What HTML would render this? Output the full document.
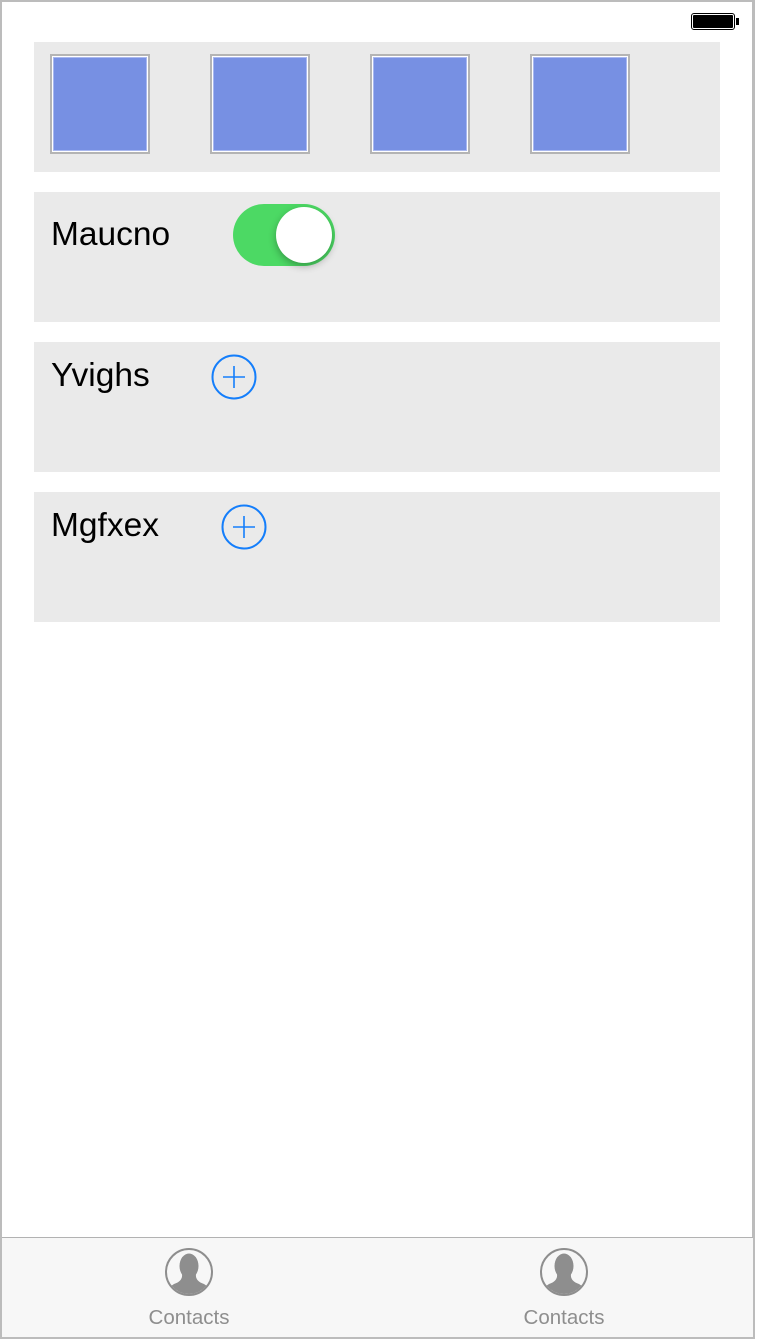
<!DOCTYPE html>
<html><head><style>
body{margin:0;width:760px;height:1340px;position:relative;font-family:"Liberation Sans",sans-serif;background:#fff;overflow:hidden}
.frame{position:absolute;left:0;top:0;width:750px;height:1334px;border:2px solid #bcbcbc;border-right-width:3px;border-bottom-width:3px}
.box{position:absolute;left:34px;width:686px;height:130px;background:#eaeaea}
.sq{position:absolute;top:54px;width:96px;height:96px;border:2px solid #b4b4b4;background:#fff}
.sq div{position:absolute;left:1px;top:1px;width:94px;height:94px;background:#7790e3;box-shadow:inset 0 0 0 1px #a9b8f0}
.lbl{position:absolute;left:51px;font-size:33.5px;color:#000}
.tab{position:absolute;left:2px;top:1237px;width:751px;height:99px;background:#f7f7f7;border-top:1px solid #b2b2b2}
.tl{position:absolute;top:1306px;font-size:20.5px;color:#8e8e8e;width:160px;text-align:center}
</style></head><body>
<div class="frame"></div>
<div style="position:absolute;left:691px;top:13px;width:44px;height:17px;border:1px solid #000;border-radius:3px;box-sizing:border-box;padding:1px"><div style="background:#000;width:100%;height:100%;border-radius:1px"></div></div>
<div style="position:absolute;left:736px;top:18px;width:3px;height:7px;background:#000"></div>
<div class="box" style="top:42px"></div>
<div class="sq" style="left:50px"><div></div></div>
<div class="sq" style="left:210px"><div></div></div>
<div class="sq" style="left:370px"><div></div></div>
<div class="sq" style="left:530px"><div></div></div>
<div class="box" style="top:192px"></div>
<div class="lbl" style="top:216px">Maucno</div>
<div style="position:absolute;left:233px;top:204px;width:102px;height:62px;border-radius:31px;background:#4cd964"></div>
<div style="position:absolute;left:276px;top:207px;width:56px;height:56px;border-radius:50%;background:#fff;box-shadow:0 3px 8px rgba(0,0,0,.3)"></div>
<div class="box" style="top:342px"></div>
<div class="lbl" style="top:357px">Yvighs</div>
<svg style="position:absolute;left:211px;top:354px" width="46" height="46"><circle cx="23" cy="23" r="21.5" fill="none" stroke="#147efb" stroke-width="2"/><path d="M23 12V34M12 23H34" stroke="#147efb" stroke-width="1.6"/></svg>
<div class="box" style="top:492px"></div>
<div class="lbl" style="top:507px">Mgfxex</div>
<svg style="position:absolute;left:221px;top:504px" width="46" height="46"><circle cx="23" cy="23" r="21.5" fill="none" stroke="#147efb" stroke-width="2"/><path d="M23 12V34M12 23H34" stroke="#147efb" stroke-width="1.6"/></svg>
<div class="tab"></div>
<svg style="position:absolute;left:164px;top:1247px" width="50" height="50"><defs><clipPath id="c"><circle cx="25" cy="25" r="22"/></clipPath></defs><circle cx="25" cy="25" r="23" fill="none" stroke="#8e8e8e" stroke-width="2"/><g clip-path="url(#c)" fill="#8e8e8e"><ellipse cx="25" cy="19" rx="9.5" ry="12.5"/><path d="M18 27 Q19 34 10 37 Q4 40 4 50 H46 Q46 40 40 37 Q31 34 32 27Z"/></g></svg>
<svg style="position:absolute;left:539px;top:1247px" width="50" height="50"><defs><clipPath id="d"><circle cx="25" cy="25" r="22"/></clipPath></defs><circle cx="25" cy="25" r="23" fill="none" stroke="#8e8e8e" stroke-width="2"/><g clip-path="url(#d)" fill="#8e8e8e"><ellipse cx="25" cy="19" rx="9.5" ry="12.5"/><path d="M18 27 Q19 34 10 37 Q4 40 4 50 H46 Q46 40 40 37 Q31 34 32 27Z"/></g></svg>
<div class="tl" style="left:109px">Contacts</div>
<div class="tl" style="left:484px">Contacts</div>
</body></html>
